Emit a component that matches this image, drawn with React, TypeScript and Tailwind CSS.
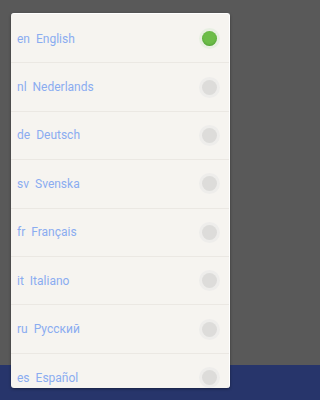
const LANGS = [
  { code: "en", name: "English", selected: true },
  { code: "nl", name: "Nederlands" },
  { code: "de", name: "Deutsch" },
  { code: "sv", name: "Svenska" },
  { code: "fr", name: "Français" },
  { code: "it", name: "Italiano" },
  { code: "ru", name: "Русский" },
  { code: "es", name: "Español" },
]

function Radio({ on }: { on?: boolean }) {
  return on ? (
    <div className="flex h-[21px] w-[21px] items-center justify-center rounded-full bg-[#e8f0e2]">
      <div className="h-[15px] w-[15px] rounded-full bg-[#6cbd48] shadow-[inset_0_-1px_2px_rgba(0,80,0,0.25)]" />
    </div>
  ) : (
    <div className="flex h-[21px] w-[21px] items-center justify-center rounded-full bg-[#eeedeb]">
      <div className="h-[15px] w-[15px] rounded-full bg-[#dddcda]" />
    </div>
  )
}

export default function App() {
  return (
    <div className="relative h-[400px] w-full overflow-hidden bg-[#595959] font-['Roboto',sans-serif]">
      <div className="absolute bottom-0 left-0 h-[35px] w-full bg-[#27356b]" />
      <div className="absolute left-[11px] top-[13px] h-[375px] w-[219px] overflow-hidden rounded-[3px] border-r border-t border-[#ffffff] bg-[#f6f4f0] shadow-[0_1px_3px_rgba(0,0,0,0.4)]">
        <div className="flex flex-col pt-[1px]">
          {LANGS.map((l, i) => (
            <div
              key={l.code}
              className={`flex h-[48.4px] shrink-0 items-center justify-between pl-[6px] pr-[9px] ${
                i < LANGS.length - 1 ? "border-b border-[#ebe8e3]" : ""
              }`}
            >
              <div className="flex items-center text-[12px] text-[#8aacf0]">
                <span>{l.code}</span>
                <span className="ml-[6px]">{l.name}</span>
              </div>
              <Radio on={l.selected} />
            </div>
          ))}
        </div>
      </div>
    </div>
  )
}
